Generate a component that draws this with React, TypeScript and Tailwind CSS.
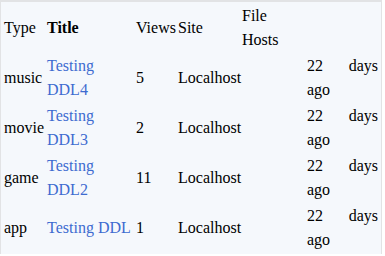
import React from 'react';

const rows = [
  { type: 'music', title: 'Testing DDL4', views: 5 },
  { type: 'movie', title: 'Testing DDL3', views: 2 },
  { type: 'game', title: 'Testing DDL2', views: 11 },
  { type: 'app', title: 'Testing DDL', views: 1 },
];

const App: React.FC = () => {
  return (
    <div className="min-h-screen bg-white font-['Liberation_Serif',serif] text-[16px] leading-[24px] text-black">
      <div className="w-[382px] border-t-2 border-l border-r border-[#e2e3e5] bg-[#f5f8fc]">
        <table className="w-full table-fixed border-separate border-spacing-[2px]">
          <thead>
            <tr>
              <th className="w-[41px] px-px py-0 text-left align-middle font-normal">Type</th>
              <th className="w-[87px] px-px py-0 text-left align-middle font-bold">Title</th>
              <th className="w-[40px] px-px py-0 text-left align-middle font-normal">Views</th>
              <th className="w-[62px] px-px py-0 text-left align-middle font-normal">Site</th>
              <th className="w-[63px] px-px py-0 text-left align-middle font-normal">File Hosts</th>
              <th className="px-px py-0"></th>
            </tr>
          </thead>
          <tbody>
            {rows.map((r) => (
              <tr key={r.title}>
                <td className="h-[48px] px-px py-0 align-middle">{r.type}</td>
                <td className="px-px py-0 align-middle">
                  <a href="#" className="text-[#3d6bd0]">{r.title}</a>
                </td>
                <td className="px-px py-0 align-middle">{r.views}</td>
                <td className="px-px py-0 align-middle">Localhost</td>
                <td className="px-px py-0 align-middle"></td>
                <td className="px-px py-0 text-justify align-middle">22 days ago</td>
              </tr>
            ))}
          </tbody>
        </table>
      </div>
    </div>
  );
};

export default App;
